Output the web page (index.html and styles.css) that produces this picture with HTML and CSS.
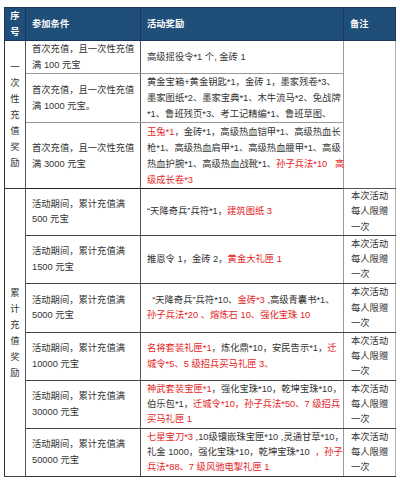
FILE: index.html
```html
<!DOCTYPE html>
<html lang="zh-CN">
<head>
<meta charset="utf-8">
<link rel="stylesheet" href="styles.css">
</head>
<body>
<table class="tbl">
  <colgroup>
    <col class="c1"><col class="c2"><col class="c3"><col class="c4">
  </colgroup>
  <thead>
    <tr class="hd">
      <th class="seq">序<br>号</th>
      <th>参加条件</th>
      <th>活动奖励</th>
      <th>备注</th>
    </tr>
  </thead>
  <tbody>
    <tr class="r1">
      <td class="grp" rowspan="3">一<br>次<br>性<br>充<br>值<br>奖<br>励</td>
      <td class="cond">首次充值，且一次性充值<br>满 100 元宝</td>
      <td class="rew">高级摇役令*1 个, 金砖 1</td>
      <td class="note" rowspan="3"></td>
    </tr>
    <tr class="r2">
      <td class="cond">首次充值，且一次性充值<br>满 1000 元宝。</td>
      <td class="rew">黄金宝箱+黄金钥匙*1，金砖 1，墨家残卷*3、<br>墨家图纸*2、墨家宝典*1、木牛流马*2、免战牌<br>*1、鲁班残页*3、考工记精编*1、鲁班草图、</td>
    </tr>
    <tr class="r3 gend">
      <td class="cond">首次充值，且一次性充值<br>满 3000 元宝</td>
      <td class="rew"><span class="red">玉兔*1</span>，金砖*1，高级热血铠甲*1、高级热血长<br>枪*1、高级热血肩甲*1、高级热血腰甲*1、高级<br>热血护腕*1、高级热血战靴*1、<span class="red">孙子兵法*10&nbsp;&nbsp;&nbsp;高<br>级成长卷*3</span></td>
    </tr>
    <tr class="r4 g2">
      <td class="grp" rowspan="6">累<br>计<br>充<br>值<br>奖<br>励</td>
      <td class="cond">活动期间，累计充值满<br>500 元宝</td>
      <td class="rew">“天降奇兵”兵符*1，<span class="red">建筑图纸 3</span></td>
      <td class="note">本次活动<br>每人限赠<br>一次</td>
    </tr>
    <tr class="r5 g2">
      <td class="cond">活动期间，累计充值满<br>1500 元宝</td>
      <td class="rew">推恩令 1，金砖 2，<span class="red">黄金大礼匣 1</span></td>
      <td class="note">本次活动<br>每人限赠<br>一次</td>
    </tr>
    <tr class="r6 g2">
      <td class="cond">活动期间，累计充值满<br>5000 元宝</td>
      <td class="rew">&nbsp;&nbsp;“天降奇兵”兵符*10、<span class="red">金砖*3</span> ,高级青囊书*1、<br><span class="red">孙子兵法*20 、熔炼石 10、强化宝珠 10</span></td>
      <td class="note">本次活动<br>每人限赠<br>一次</td>
    </tr>
    <tr class="r7 g2">
      <td class="cond">活动期间，累计充值满<br>10000 元宝</td>
      <td class="rew"><span class="red">名将套装礼匣*1</span>，炼化鼎*10，安民告示*1，<span class="red">迁<br>城令*5、5 级招兵买马礼匣 3、</span></td>
      <td class="note">本次活动<br>每人限赠<br>一次</td>
    </tr>
    <tr class="r8 g2">
      <td class="cond">活动期间，累计充值满<br>30000 元宝</td>
      <td class="rew"><span class="red">神武套装宝匣*1</span>，强化宝珠*10，乾坤宝珠*10，<br>伯乐包*1，<span class="red">迁城令*10，孙子兵法*50、7 级招兵<br>买马礼匣 1</span></td>
      <td class="note">本次活动<br>每人限赠<br>一次</td>
    </tr>
    <tr class="r9 g2">
      <td class="cond">活动期间，累计充值满<br>50000 元宝</td>
      <td class="rew"><span class="red">七星宝刀*3</span> ,10级镶嵌珠宝匣*10 ,灵通甘草*10，<br>礼金 1000，强化宝珠*10，乾坤宝珠*10&nbsp;&nbsp;<span class="red">，孙子<br>兵法*88、7 级风驰电掣礼匣 1</span></td>
      <td class="note">本次活动<br>每人限赠<br>一次</td>
    </tr>
  </tbody>
</table>
</body>
</html>
```

FILE: styles.css
```css
html, body {
  margin: 0;
  padding: 0;
  background: #ffffff;
}
body {
  padding: 7px 0 0 4px;
  font-family: "Liberation Sans", "Noto Sans CJK SC", sans-serif;
  font-size: 9.3px;
  line-height: 16px;
  color: #333333;
}
.tbl {
  border-collapse: collapse;
  table-layout: fixed;
  width: 391px;
}
.c1 { width: 21px; }
.c2 { width: 115px; }
.c3 { width: 203px; }
.c4 { width: 52px; }

.hd th {
  background: #1f4e79;
  color: #ffffff;
  font-weight: bold;
  text-align: left;
  padding: 0 6px;
  height: 32px;
  line-height: 16px;
  border: 1px solid #17375e;
  vertical-align: middle;
}
.hd th.seq {
  text-align: center;
  padding: 0;
}
td {
  padding: 0 5px 0 6px;
  vertical-align: middle;
  white-space: nowrap;
  border: 1px solid #555555;
}
td.grp {
  text-align: center;
  padding: 0;
  line-height: 16px;
  border-left: 1px solid #333333;
  border-bottom: 1px solid #333333;
}
td.cond {
  border-top-color: #9a9a9a;
  border-bottom-color: #9a9a9a;
}
td.rew {
  border-top-color: #9a9a9a;
  border-bottom-color: #9a9a9a;
  border-right-color: #9a9a9a;
}
td.note {
  border-left-color: #9a9a9a;
  border-right-color: #b0b0b0;
  padding: 0 0 0 7px;
}
.g2 td {
  border-top-color: #444444;
  border-bottom-color: #444444;
}
.g2 td.cond, .g2 td.rew, .g2 td.note {
  line-height: 15.4px;
}
.g2 td.note {
  border-left-color: #9a9a9a;
  border-right-color: #b0b0b0;
}
.gend td {
  border-bottom: 1px solid #222222;
}
.r9 td {
  border-bottom-color: #333333;
}
.red { color: #e31e24; }

.r1 td { height: 31px; }
.r2 td { height: 48px; }
.r3 td { height: 65px; }
.r4 td { height: 46px; }
.r5 td { height: 47px; }
.r6 td { height: 48px; }
.r7 td { height: 47px; }
.r8 td { height: 47px; }
.r9 td { height: 47px; }
```
